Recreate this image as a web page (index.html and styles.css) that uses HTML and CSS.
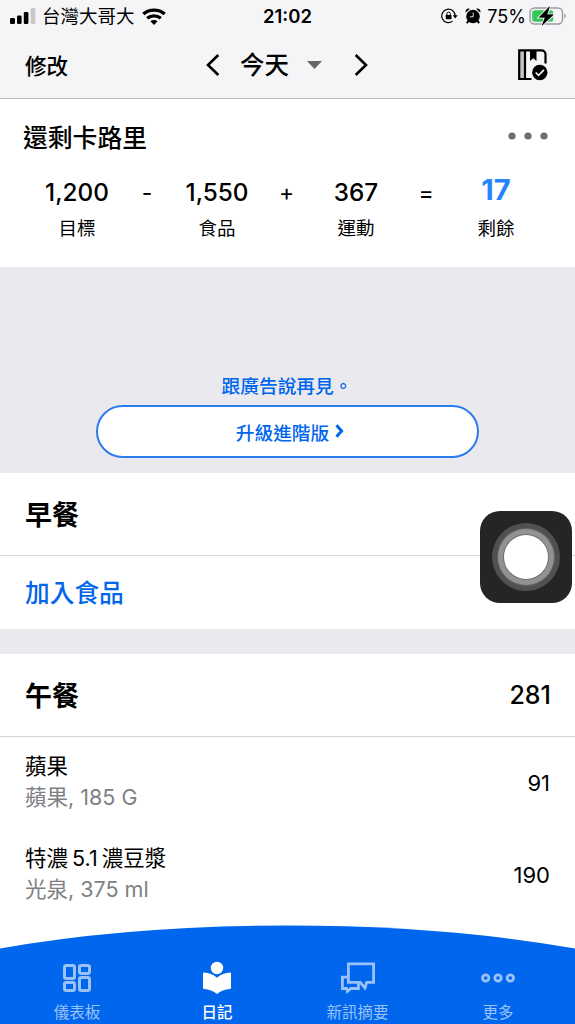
FILE: index.html
```html
<!DOCTYPE html>
<html lang="zh-Hant">
<head>
<meta charset="UTF-8">
<meta name="viewport" content="width=device-width, initial-scale=1">
<title>日記</title>
<link rel="stylesheet" href="styles.css">
</head>
<body>

<div class="status">
  <div class="status-left">
    <svg width="26" height="16" viewBox="0 0 26 16">
      <rect x="0" y="10" width="5" height="6" rx="1.3"/>
      <rect x="7" y="7.5" width="4.6" height="8.5" rx="1.3"/>
      <rect x="13.8" y="4" width="4.6" height="12" rx="1.3"/>
      <rect x="20.7" y="0" width="4.6" height="16" rx="1.3" fill="#c8c8ca"/>
    </svg>
    <span class="carrier">台灣大哥大</span>
    <svg class="wifi" width="24" height="17" viewBox="0 0 24 17">
      <path d="M1.3 6C7.4.8 16.6.8 22.7 6" fill="none" stroke="#000" stroke-width="3.4"/>
      <path d="M5.2 10.3c3.8-3.3 9.8-3.3 13.6 0" fill="none" stroke="#000" stroke-width="3.2"/>
      <path d="M12 17l-3.6-3.7c2-1.7 5.2-1.7 7.2 0z"/>
    </svg>
  </div>
  <span class="clock">21:02</span>
  <div class="status-right">
    <svg width="17" height="16" viewBox="0 0 17 16">
      <path d="M14.2 8A6.7 6.7 0 1 0 11.5 13.3" fill="none" stroke="#000" stroke-width="1.2"/>
      <path d="M11.7 7.3h5l-2.5 3.2z"/>
      <rect x="4.7" y="7" width="5.8" height="4.3" rx=".6"/>
      <path d="M5.9 7.2V5.8a1.7 1.7 0 0 1 3.4 0v1.4" fill="none" stroke="#000" stroke-width="1"/>
    </svg>
    <svg class="alarm" width="16" height="16" viewBox="0 0 16 16">
      <circle cx="8" cy="8.5" r="6.8"/>
      <path d="M.8 4.6A3 3 0 0 1 5 .8zM15.2 4.6A3 3 0 0 0 11 .8zM2.6 12.2l1.8 1.5-2 2.1-1.3-1.2zM13.4 12.2l-1.8 1.5 2 2.1 1.3-1.2z"/>
      <path d="M8.2 4.6v4.2H4.8" fill="none" stroke="#f5f5f8" stroke-width=".9"/>
    </svg>
    <span class="percent">75%</span>
    <svg class="battery" width="38" height="20" viewBox="0 0 38 20">
      <rect x="1" y="2" width="32.5" height="16" rx="4.5" fill="none" stroke="#9b9b9e" stroke-width="1.4"/>
      <path d="M35.3 7.500c2 .8 2 4.200 0 5z" fill="#9b9b9e"/>
      <rect x="3.2" y="4.2" width="21" height="11.6" rx="2.5" fill="#34c759"/>
      <path d="M20.5.8L10.3 11.3h6L13.2 19.2 24.2 8.700h-6.400z" stroke="#f5f5f8" stroke-width="2.4" paint-order="stroke"/>
      <path d="M20.5.8L10.3 11.3h6L13.2 19.2 24.2 8.700h-6.400z" stroke="#000" stroke-width=".5"/>
    </svg>
  </div>
</div>

<header class="header">
  <a class="edit">修改</a>
  <div class="day">
    <svg width="14" height="22" viewBox="0 0 14 22"><path d="M12.3 1L2 11l10.3 10" fill="none" stroke="#000" stroke-width="2.6"/></svg>
    <span class="today">今天</span>
    <svg class="caret" width="15" height="8" viewBox="0 0 15 8"><path d="M0 0h15L7.5 8z" fill="#666"/></svg>
    <svg width="14" height="22" viewBox="0 0 14 22"><path d="M1.7 1L12 11 1.7 21" fill="none" stroke="#000" stroke-width="2.6"/></svg>
  </div>
  <svg class="journal" width="30" height="32" viewBox="0 0 30 32">
    <path d="M2 2h5v28H2z" fill="#c4c4c6"/>
    <path d="M13.5 30H1.2V1.3h22.3a4 4 0 0 1 4 4v9.2" fill="none" stroke="#000" stroke-width="2.2"/>
    <path d="M7 1v29" fill="none" stroke="#000" stroke-width="2.2"/>
    <path d="M12 1h6.5v11l-3.25-2.8L12 12z"/>
    <circle cx="21.8" cy="23.5" r="7.7"/>
    <path d="M17.7 23.5l2.9 2.8 5.3-5.4" fill="none" stroke="#f5f5f8" stroke-width="1.7"/>
  </svg>
</header>

<section class="summary">
  <div class="summary-head">
    <h2>還剩卡路里</h2>
    <svg width="40" height="8" viewBox="0 0 40 8" fill="#6d6d72"><circle cx="4" cy="4" r="3.6"/><circle cx="20" cy="4" r="3.6"/><circle cx="36" cy="4" r="3.6"/></svg>
  </div>
  <div class="equation">
    <div class="term"><b>1,200</b><span>目標</span></div>
    <i>-</i>
    <div class="term"><b>1,550</b><span>食品</span></div>
    <i>+</i>
    <div class="term"><b>367</b><span>運動</span></div>
    <i>=</i>
    <div class="term left"><b>17</b><span>剩餘</span></div>
  </div>
</section>

<section class="promo">
  <p>跟廣告說再見。</p>
  <a class="upgrade">升級進階版
    <svg width="9" height="14" viewBox="0 0 9 14"><path d="M1.5 1.2L6.6 7l-5.1 5.8" fill="none" stroke="#0066ee" stroke-width="3"/></svg>
  </a>
</section>

<section class="meal empty">
  <div class="meal-head"><h3>早餐</h3></div>
  <a class="add">加入食品</a>
</section>

<section class="meal">
  <div class="meal-head"><h3>午餐</h3><span>281</span></div>
  <div class="food">
    <div><p>蘋果</p><small>蘋果, 185 G</small></div>
    <span>91</span>
  </div>
  <div class="food">
    <div><p>特濃 5.1 濃豆漿</p><small>光泉, 375 ml</small></div>
    <span>190</span>
  </div>
</section>

<!-- AssistiveTouch -->
<div class="assistive"><div class="ring"></div></div>

<nav class="tabs">
  <svg class="curve" width="575" height="99" viewBox="0 0 575 99"><path d="M0 23.5Q130 .5 287.5 .5T575 23.5V99H0z" fill="#0066ee"/></svg>
  <a class="tab">
    <svg width="28" height="28" viewBox="0 0 28 28" fill="none" stroke="#99c2f8" stroke-width="3">
      <rect x="1.5" y="1.5" width="10" height="13" rx="1.8"/><rect x="16.5" y="1.5" width="10" height="8" rx="1.8"/>
      <rect x="1.5" y="18.5" width="10" height="8" rx="1.8"/><rect x="16.5" y="13.5" width="10" height="13" rx="1.8"/>
    </svg>
    <span>儀表板</span>
  </a>
  <a class="tab active">
    <svg width="28" height="34" viewBox="0 0 28 34" fill="#fff"><circle cx="14" cy="7" r="6.2"/><path d="M14 16.8C10.5 13.5 5.5 11.8 1 11.5q-1 0-1 1v14.5q0 1 1 1c5 .3 9.5 2 13 5 3.5-3 8-4.7 13-5q1 0 1-1V12.5q0-1-1-1c-4.5.3-9.5 2-13 5.3z"/></svg>
    <span>日記</span>
  </a>
  <a class="tab">
    <svg width="34" height="31" viewBox="0 0 34 31" fill="none" stroke="#99c2f8" stroke-width="2.8">
      <path d="M7.4 1.4h25.2v18.4h-6.9l-1.7 5.6-4.8-5.6H7.4z"/>
      <path d="M7.4 14.6h-6v11.4h4.2l.8 3 3.4-3h7.6v-6"/>
    </svg>
    <span>新訊摘要</span>
  </a>
  <a class="tab">
    <svg width="34" height="10" viewBox="0 0 34 10" fill="none" stroke="#99c2f8" stroke-width="2.8"><circle cx="4.7" cy="5" r="3.2"/><circle cx="17" cy="5" r="3.2"/><circle cx="29.3" cy="5" r="3.2"/></svg>
    <span>更多</span>
  </a>
</nav>

</body>
</html>
```
FILE: styles.css
```css
:root{
  --bar:#f5f5f8;--gap:#eaeaee;--line:#d3d3d5;--blue:#0066ee;--muted:#808084;
}
*{box-sizing:border-box;}
body{margin:0;height:1024px;overflow:hidden;background:#fff;color:#000;font-family:Inter,"Noto Sans CJK TC",sans-serif;}
h2,h3,p{margin:0;}
svg{display:block;flex:none;}

.status{display:grid;grid-template-columns:1fr auto 1fr;align-items:center;height:32px;padding:0 8px 0 10px;background:var(--bar);}
.status-left,.status-right{display:flex;align-items:center;}
.status-right{justify-content:flex-end;}
.carrier{font-size:18.5px;line-height:30px;margin-left:6px;}
.wifi{margin-left:7px;}
.clock{font-size:18.5px;font-weight:600;margin-right:2px;}
.alarm{margin-left:7px;}
.percent{font-size:18px;margin:0 3px 0 6px;}

.header{display:grid;grid-template-columns:1fr auto 1fr;align-items:center;height:67px;padding:0 27px 0 25px;background:var(--bar);border-bottom:1px solid #b8b8bb;}
.edit{font-size:21.5px;font-weight:500;line-height:32px;padding-top:1px;}
.day{display:flex;align-items:center;padding-left:1px;}
.today{font-size:24.5px;font-weight:500;line-height:34px;margin:0 18px 0 20px;}
.caret{margin-right:32px;}
.journal{justify-self:end;}

.summary{height:168px;padding:20px 27px 0 23px;}
.summary-head{display:flex;justify-content:space-between;align-items:center;height:33px;}
h2{font-size:24.8px;font-weight:500;line-height:36px;padding-top:4px;}
.equation{display:grid;grid-template-columns:108px 32px 108px 31px 108px 32px 108px;height:76px;margin:20px 0 0;}
.term{display:flex;flex-direction:column;align-items:center;}
.term b{font-size:24.3px;font-weight:500;line-height:41px;}
.term span{font-size:18.5px;line-height:30px;}
.equation i{font-style:normal;font-size:23px;line-height:42px;text-align:center;}
.term.left b{font-size:29px;font-weight:700;color:#2684ff;line-height:36px;margin-bottom:5px;}

.promo{display:flex;flex-direction:column;align-items:center;height:206px;padding-top:104px;background:var(--gap);color:var(--blue);font-size:18.7px;font-weight:500;}
.promo p{line-height:32px;height:34px;padding-right:1px;}
.upgrade{display:flex;align-items:center;justify-content:center;gap:6px;width:383px;height:53px;padding:0 0 1px 5px;background:#fff;border:2px solid #2b7cee;border-radius:27px;}

.meal-head{display:flex;justify-content:space-between;align-items:center;height:83px;padding:0 24px 0 25px;border-bottom:1px solid var(--line);}
.meal-head span{font-size:25px;font-weight:500;}
h3{font-size:27px;font-weight:700;line-height:40px;padding-top:3px;}
.add{display:flex;align-items:center;height:73px;padding:0 25px 3px;color:var(--blue);font-size:24.7px;font-weight:500;}
.empty{border-bottom:25px solid var(--gap);}
.food{display:flex;justify-content:space-between;align-items:center;height:92px;padding:0 25px;}
.food p,.food small{display:block;font-size:21.5px;line-height:31px;}
.food div{padding-bottom:3px;}
.food p{word-spacing:-2px;}
.food small{color:var(--muted);}
.food span{font-size:22px;}

.assistive{position:absolute;left:480px;top:511px;width:92px;height:92px;border-radius:20px;background:#252525;display:grid;place-items:center;}
.ring{width:44px;height:44px;border-radius:50%;background:#fff;box-shadow:0 0 0 1px #6f6f6f,0 0 0 6px #929292,0 0 0 7px #666,0 0 0 12px #505050;}

.tabs{position:absolute;left:0;bottom:0;width:575px;height:99px;display:grid;grid-template-columns:140px 140px 141px 140px;padding:33px 7px 0;}
.curve{position:absolute;left:0;top:0;z-index:-1;}
.tab{display:flex;flex-direction:column;align-items:center;color:#99c2f8;font-size:15.5px;}
.tab svg{height:40px;}
.tab span{line-height:30px;}
.active{color:#fff;font-weight:500;}
```
